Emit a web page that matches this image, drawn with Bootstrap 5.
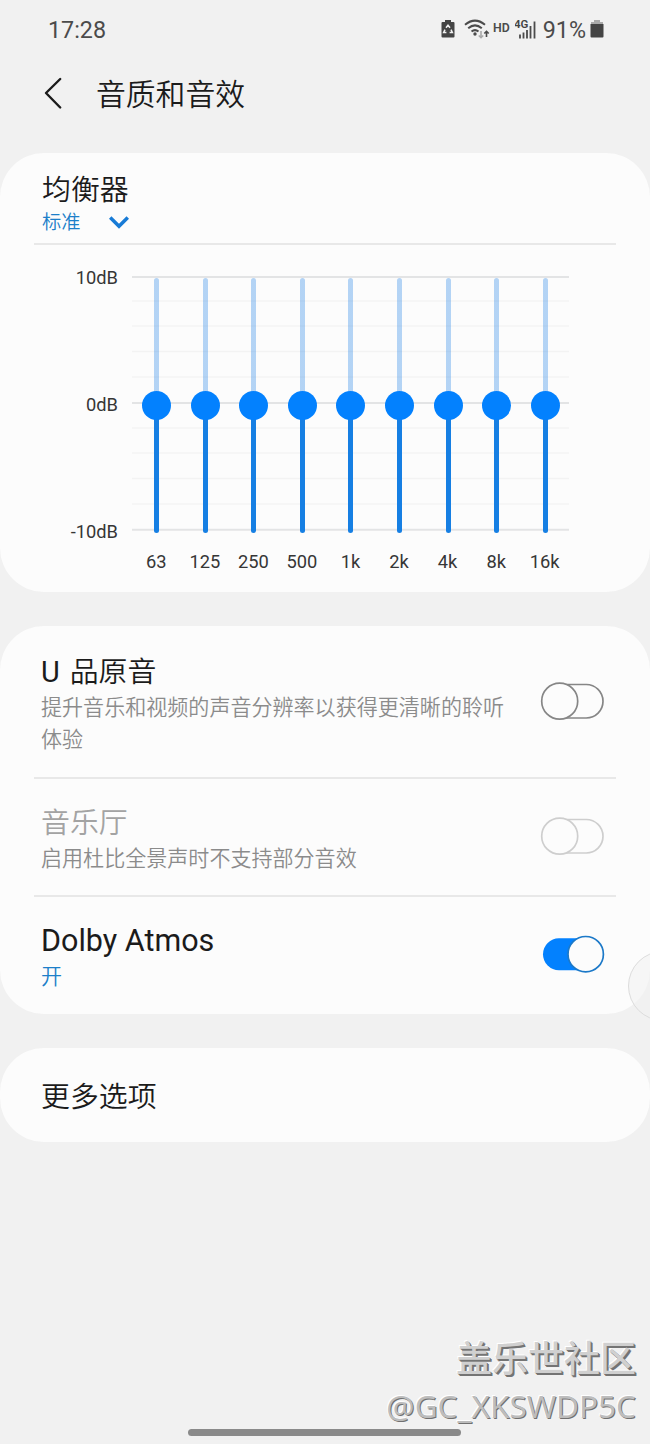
<!DOCTYPE html>
<html lang="zh-CN">
<head>
<meta charset="utf-8">
<meta name="viewport" content="width=device-width, initial-scale=1">
<title>音质和音效</title>
<link href="https://cdn.jsdelivr.net/npm/bootstrap@5.3.0/dist/css/bootstrap.min.css" rel="stylesheet">
<style>
  body { background: #f1f1f1; color: #1b1b1b; font-family: Roboto, "Noto Sans CJK SC", sans-serif; font-weight: 400; overflow: hidden; }
  .screen { width: 650px; height: 1444px; }
  .statusbar { height: 58px; padding: 1px 46px 0 48px; color: #4b4b4b; font-size: 23.3px; line-height: 58px; }
  .status-hd { font-size: 12.3px; font-weight: 600; line-height: 1; margin: -2px 0 0 3px; }
  .status-icons svg { position: static; margin-top: -2px; }
  .titlebar { height: 95px; padding: 1px 0 24px 43px; }
  .titlebar h1 { font-size: 29.8px; font-weight: 350; margin: 2px 0 0 33px; line-height: 40px; }
  .panel { background: #fcfcfc; border: 0; border-radius: 44px; color: inherit; }
  .panel-eq { height: 439px; }
  .eq-head { height: 92px; margin: 0 34px; padding: 18px 0 0 8px; border-bottom: 2px solid #e8e8e8; }
  .label-lg { font-size: 28.9px; line-height: 38px; font-weight: 350; margin: 0; }
  .latin { font-weight: 400; font-size: 30.5px; }
  .eq-preset { font-size: 19.3px; line-height: 28px; gap: 28px; }
  .eq-body { display: grid; grid-template-columns: 118px 437px; column-gap: 14px; padding-top: 31px; font-size: 18.3px; color: #363636; }
  .eq-scale { height: 274px; line-height: 20px; margin: -8px 0; text-align: right; }
  .eq-plot { display: grid; height: 258px; }
  .eq-plot > * { grid-area: 1 / 1; }
  .eq-bands, .eq-names { display: grid; grid-template-columns: repeat(9, 1fr); justify-items: center; }
  .eq-bands { margin: 0 -0.5px 0 0.5px; }
  .eq-track { width: 5px; height: 255px; margin-top: 1.5px; border-radius: 3px; background: linear-gradient(rgba(26,126,230,.32) 50%, #167fe3 50%); display: flex; align-items: center; justify-content: center; }
  .eq-thumb { flex: none; width: 29px; height: 29px; border-radius: 50%; background: #0381fe; }
  .eq-names { grid-column: 2; line-height: 22px; margin-top: 17px; }
  .gap-block { height: 34px; }
  .panel-list { height: 388px; }
  .setting { margin: 0 34px; padding-left: 7px; padding-right: 11px; }
  .setting + .setting { border-top: 2px solid #e8e8e8; }
  .set-a { height: 151px; padding-top: 27px; }
  .set-b { height: 118px; padding-top: 25px; }
  .set-c { height: 119px; padding-top: 25px; }
  .set-a svg { margin-top: 28px; }
  .set-b svg, .set-c svg { margin-top: 12px; }
  .desc { font-size: 21.05px; line-height: 32px; color: #8b8b8b; font-weight: 350; margin: 1px 0 0; width: 470px; }
  .accent { color: #1c7fc9; font-weight: 350; }
  .dim { color: #a3a3a3; }
  .panel-more { height: 94px; padding: 4px 41px 0; }
  .edge-handle { position: absolute; left: 628px; top: 951px; width: 70px; height: 70px; border-radius: 50%; border: 1.5px solid #dcdcdc; background: rgba(241,241,241,.55); }
  .stamp { position: absolute; right: 14px; top: 1336px; text-align: right; color: #d0d0d0; text-shadow: 1px 1px 0 #747474, 2px 2px 0 #747474, -1px -1px 0 #fff; }
  .stamp-name { font-size: 36px; line-height: 48px; font-weight: 500; }
  .stamp-id { font-family: "Noto Sans", sans-serif; font-size: 31.5px; line-height: 43px; font-weight: 400; color: #bdbdbd; text-shadow: 1px 1px 0 #707070, -1px -1px 0 #fff; }
  .homebar { position: absolute; left: 188px; top: 1429px; width: 273px; height: 7px; border-radius: 4px; background: #8a8a8a; }
</style>
</head>
<body>
<main class="screen position-relative overflow-hidden">
  <header class="statusbar d-flex justify-content-between">
    <span>17:28</span>
    <div class="status-icons d-flex align-items-center">
      <svg width="14" height="20" viewBox="0 0 14 20"><path d="M4 1h6v2h2.500q1 0 1 1v13.500q0 1-1 1h-11q-1 0-1-1V4q0-1 1-1H4z" fill="#444"/><path d="M5 8.800 7 6.200l2 2.600M10 10.600l1.400 3H8.600M5.400 13.600H2.600l1.400-3" fill="none" stroke="#f1f1f1" stroke-width="1.500"/></svg>
      <svg class="ms-2" width="27" height="22" viewBox="0 0 27 22" fill="none" stroke="#4b4b4b" stroke-width="2"><path d="M2 6.700Q12 -1.500 22 6.700M5.200 10.200Q12 4.500 18.800 10.200M8.500 13.500Q12 10.800 15.500 13.500"/><circle cx="12" cy="16" r="1.700" fill="#4b4b4b" stroke="none"/><path d="M18 13v6.500m-2.200-2 2.200 2.200 2.200-2.200" stroke="#aaa" stroke-width="1.600"/><path d="M23.500 19v-5.500m-2.200 2 2.200-2.200 2.200 2.200" stroke-width="1.600"/></svg>
      <span class="status-hd">HD</span>
      <svg style="margin-left:5px" width="23" height="22" viewBox="0 0 23 22"><text x="-1" y="9.500" font-family="Roboto" font-size="11.500" font-weight="600" fill="#444">4G</text><path d="M5 20.500v-4M8.500 20.500v-6M12 20.500V12M15.500 20.500V8M19.500 20.500V3.500" stroke="#4b4b4b" stroke-width="1.800"/></svg>
      <span style="margin-left:5px">91%</span>
      <svg class="ms-1" width="14" height="20" viewBox="0 0 14 20"><path d="M4 1h6v2h3v3H1V3h3z" fill="#aaa"/><path d="M.5 5h13v12.500q0 1-1 1h-11q-1 0-1-1z" fill="#444"/></svg>
    </div>
  </header>
  <nav class="titlebar d-flex align-items-center">
    <svg width="20" height="34" viewBox="0 0 20 34" fill="none" stroke="#1b1b1b" stroke-width="2.400" stroke-linecap="round" stroke-linejoin="round"><path d="M17.200 2 3 16 17.200 30.500"/></svg>
    <h1>音质和音效</h1>
  </nav>

  <section class="card panel panel-eq">
    <div class="eq-head">
      <h2 class="label-lg">均衡器</h2>
      <div class="eq-preset accent d-flex align-items-center"><span>标准</span><svg width="20" height="14" viewBox="0 0 20 14" fill="none" stroke="#187bd6" stroke-width="3.500"><path d="M1.200 1.500 10 10.200 18.800 1.500"/></svg></div>
    </div>
    <div class="eq-body">
      <div class="eq-scale d-flex flex-column justify-content-between"><span>10dB</span><span>0dB</span><span>-10dB</span></div>
      <div class="eq-plot">
        <svg width="437" height="258" viewBox="0 0 437 258" fill="none"><path d="M0 25h437M0 50h437M0 75.500h437M0 101h437M0 152h437M0 177h437M0 202.500h437M0 228h437" stroke="#f3f3f3" stroke-width="1.500"/><path d="M0 1h437M0 127h437M0 253.700h437" stroke="#e3e4e5" stroke-width="2"/></svg>
        <div class="eq-bands">
          <div class="eq-track"><i class="eq-thumb"></i></div><div class="eq-track"><i class="eq-thumb"></i></div><div class="eq-track"><i class="eq-thumb"></i></div>
          <div class="eq-track"><i class="eq-thumb"></i></div><div class="eq-track"><i class="eq-thumb"></i></div><div class="eq-track"><i class="eq-thumb"></i></div>
          <div class="eq-track"><i class="eq-thumb"></i></div><div class="eq-track"><i class="eq-thumb"></i></div><div class="eq-track"><i class="eq-thumb"></i></div>
        </div>
      </div>
      <div class="eq-names"><span>63</span><span>125</span><span>250</span><span>500</span><span>1k</span><span>2k</span><span>4k</span><span>8k</span><span>16k</span></div>
    </div>
  </section>

  <div class="gap-block"></div>

  <section class="card panel panel-list">
    <div class="setting set-a d-flex justify-content-between">
      <div><h2 class="label-lg"><span class="fw-normal">U</span>&nbsp;&#8202;品原音</h2><p class="desc">提升音乐和视频的声音分辨率以获得更清晰的聆听体验</p></div>
      <svg class="flex-shrink-0" width="66" height="40" viewBox="0 0 66 40" fill="#fcfcfc" stroke="#868686" stroke-width="1.700"><rect x="4" y="3.500" width="60" height="33.500" rx="16.750"/><circle cx="20.700" cy="20.200" r="18"/></svg>
    </div>
    <div class="setting set-b d-flex justify-content-between">
      <div><h2 class="label-lg dim">音乐厅</h2><p class="desc">启用杜比全景声时不支持部分音效</p></div>
      <svg class="flex-shrink-0" width="66" height="40" viewBox="0 0 66 40" fill="#fcfcfc" stroke="#cecece" stroke-width="1.700"><rect x="4" y="3.500" width="60" height="33.500" rx="16.750"/><circle cx="20.700" cy="20.200" r="18"/></svg>
    </div>
    <div class="setting set-c d-flex justify-content-between">
      <div><h2 class="label-lg latin">Dolby Atmos</h2><p class="desc"><span class="accent">开</span></p></div>
      <svg class="flex-shrink-0" width="66" height="40" viewBox="0 0 66 40"><rect x="4" y="4.300" width="56" height="32" rx="16" fill="#0381fe"/><circle cx="46.700" cy="20.200" r="17.700" fill="#fcfcfc" stroke="#1c79c8" stroke-width="1.700"/></svg>
    </div>
  </section>

  <div class="gap-block"></div>

  <section class="card panel panel-more justify-content-center">
    <h2 class="label-lg">更多选项</h2>
  </section>

  <div class="edge-handle"></div>
  <div class="stamp"><div class="stamp-name">盖乐世社区</div><div class="stamp-id">@GC_XKSWDP5C</div></div>
  <div class="homebar"></div>
</main>
<script src="https://cdn.jsdelivr.net/npm/bootstrap@5.3.0/dist/js/bootstrap.bundle.min.js"></script>
</body>
</html>
